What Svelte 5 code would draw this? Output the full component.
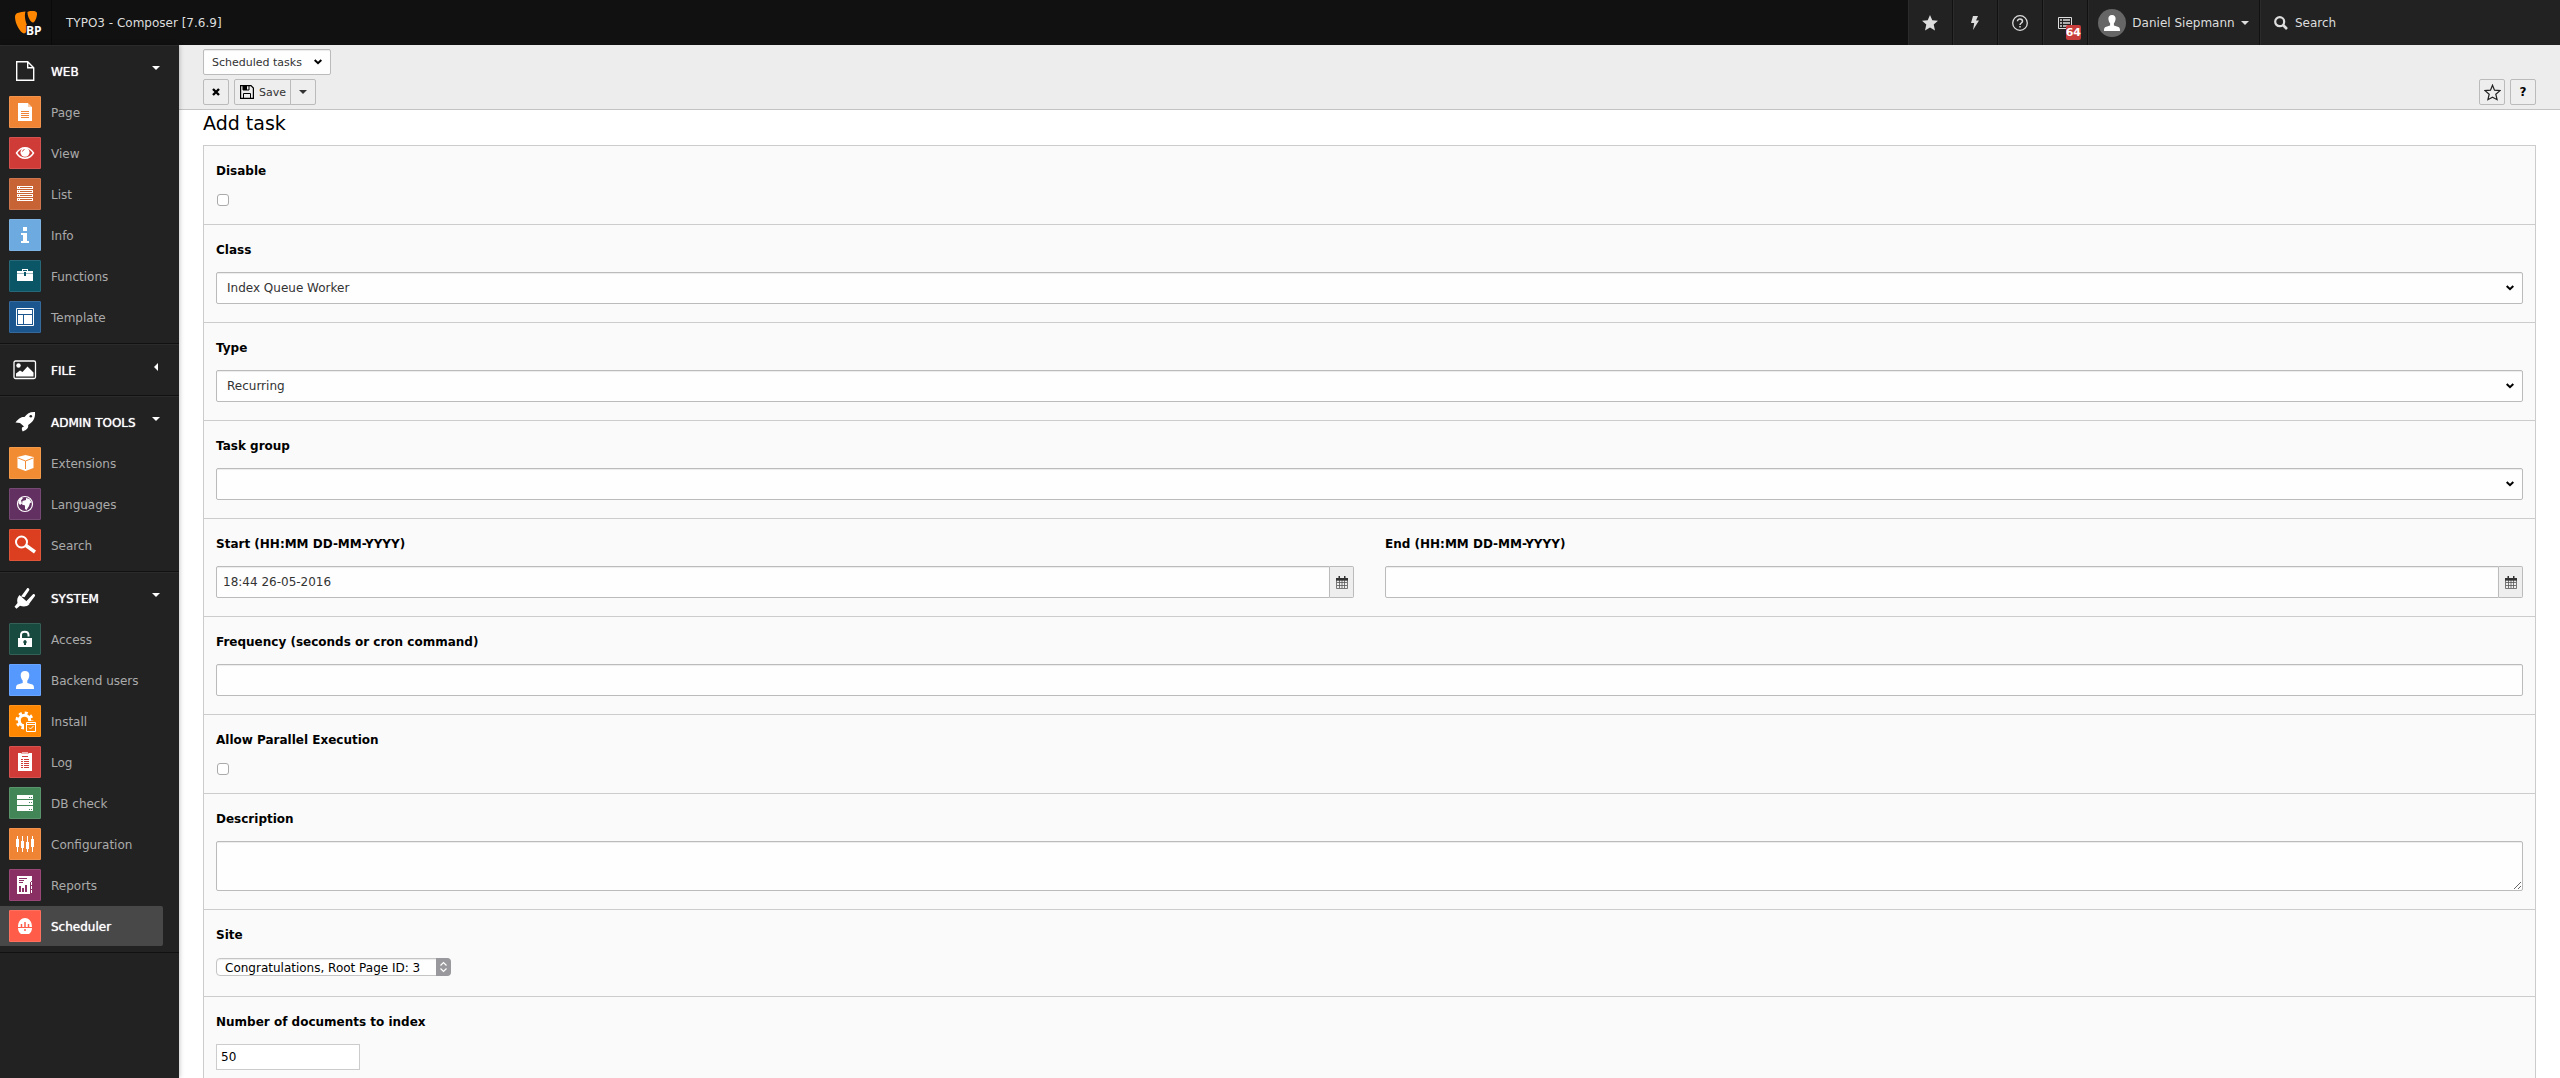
<script lang="ts">
    interface Module {
        label: string;
        icon: string;
        color: string;
    }

    interface Group {
        label: string;
        icon: string;
        open: boolean;
        items: Module[];
    }

    const groups: Group[] = [
        {
            label: "WEB",
            icon: "web",
            open: true,
            items: [
                { label: "Page", icon: "page", color: "#ef8534" },
                { label: "View", icon: "view", color: "#cf3c38" },
                { label: "List", icon: "list", color: "#c86335" },
                { label: "Info", icon: "info", color: "#6daae0" },
                { label: "Functions", icon: "functions", color: "#0a5566" },
                { label: "Template", icon: "template", color: "#1b568f" },
            ],
        },
        { label: "FILE", icon: "file", open: false, items: [] },
        {
            label: "ADMIN TOOLS",
            icon: "tools",
            open: true,
            items: [
                { label: "Extensions", icon: "extensions", color: "#f28c33" },
                { label: "Languages", icon: "languages", color: "#633062" },
                { label: "Search", icon: "search", color: "#db3f20" },
            ],
        },
        {
            label: "SYSTEM",
            icon: "system",
            open: true,
            items: [
                { label: "Access", icon: "access", color: "#194a3f" },
                { label: "Backend users", icon: "users", color: "#5599ff" },
                { label: "Install", icon: "install", color: "#ff8700" },
                { label: "Log", icon: "log", color: "#cf3c38" },
                { label: "DB check", icon: "db", color: "#428657" },
                { label: "Configuration", icon: "config", color: "#ef8534" },
                { label: "Reports", icon: "reports", color: "#8a2f63" },
                { label: "Scheduler", icon: "scheduler", color: "#ff5d49" },
            ],
        },
    ];

    let active = $state("Scheduler");
    let disabled = $state(false);
    let parallel = $state(false);
    let start = $state("18:44 26-05-2016");
    let end = $state("");
    let frequency = $state("");
    let description = $state("");
    let documents = $state("50");
</script>

{#snippet groupIcon(name: string)}
    <svg width="32" height="32" viewBox="0 0 32 32" aria-hidden="true">
        {#if name === "web"}
            <path d="M7.700 6.700h11l6 6v12.600h-17zM18.700 6.700v6h6" fill="none" stroke="#fff" stroke-width="1.400" />
        {:else if name === "file"}
            <rect x="5" y="7" width="21.500" height="17.500" rx="1.500" fill="none" stroke="#fff" stroke-width="1.300" />
            <circle cx="9.500" cy="11.500" r="2.200" fill="#fff" />
            <path d="M7 22.500v-3l4-3 2.500 1.500 5-5.500 6 6v4z" fill="#fff" />
        {:else if name === "tools"}
            <path d="M26 6c-5-.3-8 1.500-10.500 5-3-.3-5.500.8-9 5.500l4.500.5 4 3.500-2 1c-.3 1.700-.2 2.500.8 4 4-2 5.700-3 5.400-6.500C24 16 26.500 12 26 6z" fill="#fff" />
            <circle cx="21.800" cy="10.300" r="1.300" fill="#222" />
        {:else}
            <path d="M10.500 13l10 9c-2.500 2.800-6 3-9.500 1.800l-3.500 2.900-2-2 3-3.700c-.8-3.200 0-6 2-8z" fill="#fff" />
            <path d="M12 14.500l6-8c1-1.200 3 .4 2.200 1.800l-4.700 7M17 19.500l7-7.300c1.200-1 2.800.8 1.800 2L20 22z" fill="#fff" />
        {/if}
    </svg>
{/snippet}

{#snippet moduleIcon(name: string, color: string)}
    <svg width="32" height="32" viewBox="0 0 32 32" aria-hidden="true">
        <rect width="32" height="32" rx="1" fill={color} />
        <rect x=".5" y=".5" width="31" height="31" rx="1" fill="none" stroke="#fff" stroke-opacity=".12" />
        {#if name === "page"}
            <path d="M9 7h10v4h4v14H9z" fill="#fff" />
            <path d="M19 7l4 4h-4z" fill="#fff" fill-opacity=".6" />
            <path d="M12 15.500h8M12 17.500h8M12 19.500h8M12 21.500h8" stroke={color} />
        {:else if name === "view"}
            <path d="M7.500 16c4.500-7 12.500-7 17 0-4.500 7-12.500 7-17 0z" fill="none" stroke="#fff" stroke-width="1.400" />
            <circle cx="16" cy="15.300" r="4.500" fill="#fff" />
            <path d="M13.500 14.500a2.500 2.500 0 0 1 2-2" fill="none" stroke={color} />
        {:else if name === "list"}
            <path d="M8 8h16v3H8zM8 12h16v3H8zM8 16h16v3H8zM8 20h16v3H8z" fill="#fff" />
            <path d="M9 9.500h1m1 0h12M9 13.500h1m1 0h12M9 17.500h1m1 0h12M9 21.500h1m1 0h12" stroke={color} />
        {:else if name === "info"}
            <path d="M14 8h4v4h-4zM12 14h6v8h2v2h-8v-2h2v-6h-2z" fill="#fff" />
        {:else if name === "functions"}
            <path d="M13 11V9h6v2h5v10H8V11z" fill="#fff" />
            <path d="M14 10.500h4" stroke={color} />
            <path d="M8 13.500h7m2 0h7" stroke={color} stroke-opacity=".4" />
            <path d="M15 12h2v4h-2z" fill={color} />
        {:else if name === "template"}
            <path d="M7.500 7.500h17v17h-17z" fill="none" stroke="#fff" />
            <path d="M9 9h14v4H9zM9 14h5v9H9zM15 14h8v9h-8z" fill="#fff" />
        {:else if name === "extensions"}
            <path d="M16.500 8l8 2v11l-8 3-8-3V10z" fill="#fff" />
            <path d="M9 11l7.500 3 7.500-3M16.500 14v8" fill="none" stroke={color} />
        {:else if name === "languages"}
            <circle cx="16" cy="16" r="7.500" fill="none" stroke="#fff" stroke-width="1.200" />
            <path d="M17 10l3.500 1 2 3.500-1.500.5-1 3-2.500 4-1.500-1v-3.500l-3-1 .5-3.500 3.500-1zM10 12l2-2.500 2 .5-2 2.500 1 3-2 1.500-1.500-2z" fill="#fff" />
        {:else if name === "search"}
            <circle cx="12.500" cy="13" r="5.500" fill="none" stroke="#fff" stroke-width="2" />
            <path d="M17 16.500l9 6.500" stroke="#fff" stroke-width="3.400" />
        {:else if name === "access"}
            <path d="M9 15h14v9H9z" fill="#fff" />
            <path d="M12 15v-3c0-4.500 7.500-4.500 7.500 0v1.500" fill="none" stroke="#fff" stroke-width="2" />
            <path d="M16 17a2 2 0 0 1 1 3.500V22h-2v-1.500A2 2 0 0 1 16 17z" fill={color} />
        {:else if name === "users"}
            <path d="M16 7c3 0 4.500 2 4.300 4.500-.2 2.500-1 4-2 5V19l5 1.500c1.200.5 1.700 1.500 1.700 4.500H7c0-3 .5-4 1.700-4.500l5-1.500v-2.500c-1-1-1.800-2.500-2-5C11.500 9 13 7 16 7z" fill="#fff" />
        {:else if name === "install"}
            <circle cx="15.500" cy="15.500" r="5.200" fill="none" stroke="#fff" stroke-width="3" />
            <circle cx="15.500" cy="15.500" r="7.500" fill="none" stroke="#fff" stroke-width="3" stroke-dasharray="3 2.890" />
            <path d="M15 16h14v13H15z" fill={color} />
            <path d="M17.500 17.500h9v9h-9zM17.500 19.500h9" fill="none" stroke="#fff" />
            <path d="M20 22.500l1.500 1.500 3-3" fill="none" stroke="#fff" />
        {:else if name === "log"}
            <path d="M9 7h14v18H9z" fill="#fff" />
            <path d="M13 6.500h6" stroke="#fff" stroke-opacity=".6" />
            <path d="M12 7.500h8" stroke={color} stroke-opacity=".4" />
            <path d="M13 10.500h6M12 13.500h2m1 0h5M12 15.500h2m1 0h5M12 17.500h2m1 0h5M12 19.500h2m1 0h5M12 21.500h2m1 0h5" stroke={color} />
        {:else if name === "db"}
            <path d="M8 8h16v4H8zM8 13h16v5H8zM8 19h16v5H8z" fill="#fff" />
            <path d="M20 10.500h1m1 0h1M20 15.500h1m1 0h1M20 22.500h1m1 0h1" stroke={color} />
        {:else if name === "config"}
            <path d="M8.500 8v16M13.500 8v16M18.500 8v16M23.500 8v16" stroke="#fff" />
            <path d="M7 11h3v8H7zM12 13h3v7h-3zM17 14h3v7h-3zM22 11h3v8h-3z" fill="#fff" />
        {:else if name === "reports"}
            <path d="M8 7h15v5h-1v13H8z" fill="#fff" />
            <path d="M10 9.500h8M10 11.500h5M10 13.500h4" stroke={color} />
            <path d="M10 17h2v6h-2zM13 19h2v4h-2zM16 16h2v7h-2z" fill={color} />
            <path d="M22.500 13v12" stroke="#fff" stroke-dasharray="3 1" />
            <path d="M21.500 13v12" stroke={color} />
        {:else}
            <path d="M9 17c0-12 14-12 14 0zM9 18h14c0 3-1.500 5-3 6h-8c-1.500-1-3-3-3-6z" fill="#fff" />
            <path d="M12.500 14v3M16 12v5M19.500 14v3M16 19v2" stroke={color} stroke-width="1.500" />
        {/if}
    </svg>
{/snippet}

{#snippet chevron()}
    <svg class="chevron" width="8" height="6" viewBox="0 0 8 6" aria-hidden="true">
        <path d="M.7 1l3.300 3.200L7.300 1" fill="none" stroke="#000" stroke-width="2" />
    </svg>
{/snippet}

{#snippet calendar()}
    <svg width="12" height="13" viewBox="0 0 12 13" aria-hidden="true">
        <path d="M.5 4h11v8.500H.5zM3.500 4v8M6 4v8M8.500 4v8M1 6.500h10M1 9.500h10" fill="none" stroke="#555" stroke-width=".8" />
        <path d="M0 2h12v2.500H0zM2.500 0h1.500v3H2.500zM8 0h1.500v3H8z" fill="#333" />
    </svg>
{/snippet}

<div class="backend">
    <header class="topbar">
        <a class="logo" href="#top" aria-label="TYPO3">
            <svg width="32" height="28" viewBox="0 0 32 28">
                <path d="M0 6c0-2 1-3.500 2.500-4C5 1.200 8 .7 10.500.500 9 5 10.500 11 13 16.500 12 20 11 22.500 9 22.500 5 21.500 0 12.500 0 6z" fill="#ff8700" />
                <path d="M12.500 1.500C12.500.5 14 0 17 0s5 .6 5 2.500c0 3.500-2 9-4 9-2.500 0-5.500-6-5.500-10z" fill="#ff8700" />
                <text x="11" y="24" class="logo-text">BP</text>
            </svg>
        </a>
        <span class="site-name">TYPO3 - Composer [7.6.9]</span>
        <nav class="toolbar" aria-label="Toolbar">
            <button class="tool" aria-label="Bookmarks">
                <svg width="16" height="16" viewBox="0 0 16 16">
                    <path d="M8 0l2.300 5.200 5.700.6-4.300 3.800 1.300 6L8 12.600 3 15.600l1.300-6L0 5.800l5.700-.6z" fill="#ddd" />
                </svg>
            </button>
            <button class="tool" aria-label="Clear cache">
                <svg width="8" height="14" viewBox="0 0 8 14">
                    <path d="M2 0h5L5 4.500h3L2 14l1.200-7H0z" fill="#ddd" />
                </svg>
            </button>
            <button class="tool" aria-label="Help">
                <svg width="16" height="16" viewBox="0 0 16 16">
                    <circle cx="8" cy="8" r="7.300" fill="none" stroke="#ddd" stroke-width="1.300" />
                    <path d="M5.500 6.300c0-3.200 5-3 5 0 0 1.700-2.500 1.700-2.500 3.700M8 11v1.600" fill="none" stroke="#ddd" stroke-width="1.500" />
                </svg>
            </button>
            <button class="tool" aria-label="System information">
                <svg width="14" height="12" viewBox="0 0 14 12">
                    <path d="M.5.500h13v11H.5z" fill="none" stroke="#ddd" />
                    <path d="M2 3h2m1 0h7M2 6h2m1 0h7M2 9h2m1 0h7" stroke="#ddd" stroke-width="1.500" />
                </svg>
                <span class="badge">64</span>
            </button>
            <button class="tool user">
                <svg width="28" height="28" viewBox="0 0 28 28" aria-hidden="true">
                    <circle cx="14" cy="14" r="14" fill="#666" />
                    <path d="M14 6c2.600 0 3.800 1.700 3.600 4-.2 2-.8 3.300-1.700 4.200v2.300l4.500 1.500c1.200.4 1.600 1.300 1.600 4H6c0-2.700.4-3.600 1.600-4l4.500-1.500v-2.300c-.9-.9-1.500-2.200-1.700-4.200C10.200 7.700 11.400 6 14 6z" fill="#fff" />
                </svg>
                <span>Daniel Siepmann</span>
                <i class="caret"></i>
            </button>
            <button class="tool search">
                <svg width="14" height="14" viewBox="0 0 14 14">
                    <circle cx="5.700" cy="5.700" r="4.500" fill="none" stroke="#ddd" stroke-width="2.200" />
                    <path d="M9 9l4 4" stroke="#ddd" stroke-width="2.600" />
                </svg>
                <span>Search</span>
            </button>
        </nav>
    </header>

    <div class="workspace">
        <nav class="modules" aria-label="Modules">
            {#each groups as group}
                <section class="group">
                    <button class="group-header" aria-expanded={group.open}>
                        {@render groupIcon(group.icon)}
                        <span class="group-name">{group.label}</span>
                        <i class="caret" class:closed={!group.open}></i>
                    </button>
                    {#if group.items.length}
                        <ul class="items">
                            {#each group.items as item}
                                <li>
                                    <a
                                        class="item"
                                        class:active={active === item.label}
                                        href="#{item.icon}"
                                        onclick={() => (active = item.label)}
                                    >
                                        {@render moduleIcon(item.icon, item.color)}
                                        <span class="item-name">{item.label}</span>
                                    </a>
                                </li>
                            {/each}
                        </ul>
                    {/if}
                </section>
            {/each}
        </nav>

        <main class="content">
            <div class="docheader">
                <div class="select menu">
                    <select aria-label="Function">
                        <option>Scheduled tasks</option>
                    </select>
                    {@render chevron()}
                </div>
                <div class="buttons">
                    <button class="btn square" aria-label="Close">
                        <svg width="8" height="8" viewBox="0 0 8 8">
                            <path d="M1 1l6 6M7 1L1 7" stroke="#000" stroke-width="2.400" />
                        </svg>
                    </button>
                    <div class="btn-group">
                        <button class="btn save">
                            <svg width="14" height="14" viewBox="0 0 14 14" aria-hidden="true">
                                <path d="M.6.600h10.400l2.400 2.400v10.400H.6z" fill="none" stroke="#000" stroke-width="1.200" />
                                <path d="M3 0h6v5H3zM3.500 13.500v-5h7v5" fill="none" stroke="#000" />
                                <path d="M3 1h4v4H3z" />
                            </svg>
                            <span>Save</span>
                        </button>
                        <button class="btn square" aria-label="More save options">
                            <i class="caret"></i>
                        </button>
                    </div>
                    <button class="btn square push" aria-label="Create bookmark">
                        <svg width="17" height="17" viewBox="0 0 17 17">
                            <path d="M8.500 1.200l2 5 5.500.4-4.200 3.600 1.300 5.500-4.600-2.400-4.600 2.400 1.300-5.500L1 6.600l5.500-.4z" fill="none" stroke="#222" stroke-width="1.200" />
                        </svg>
                    </button>
                    <button class="btn square help" aria-label="Help">?</button>
                </div>
            </div>

            <div class="module-body">
                <h1>Add task</h1>
                <form class="fields" onsubmit={(e) => e.preventDefault()}>
                    <div class="row">
                        <label for="disable">Disable</label>
                        <input id="disable" type="checkbox" bind:checked={disabled} />
                    </div>
                    <div class="row">
                        <label for="class">Class</label>
                        <div class="select">
                            <select id="class">
                                <option>Index Queue Worker</option>
                            </select>
                            {@render chevron()}
                        </div>
                    </div>
                    <div class="row">
                        <label for="type">Type</label>
                        <div class="select">
                            <select id="type">
                                <option>Recurring</option>
                                <option>Single</option>
                            </select>
                            {@render chevron()}
                        </div>
                    </div>
                    <div class="row">
                        <label for="group">Task group</label>
                        <div class="select">
                            <select id="group">
                                <option></option>
                            </select>
                            {@render chevron()}
                        </div>
                    </div>
                    <div class="row columns">
                        <div>
                            <label for="start">Start (HH:MM DD-MM-YYYY)</label>
                            <div class="date">
                                <input id="start" class="control" type="text" bind:value={start} />
                                <button class="addon" type="button" aria-label="Pick start date">
                                    {@render calendar()}
                                </button>
                            </div>
                        </div>
                        <div>
                            <label for="end">End (HH:MM DD-MM-YYYY)</label>
                            <div class="date">
                                <input id="end" class="control" type="text" bind:value={end} />
                                <button class="addon" type="button" aria-label="Pick end date">
                                    {@render calendar()}
                                </button>
                            </div>
                        </div>
                    </div>
                    <div class="row">
                        <label for="frequency">Frequency (seconds or cron command)</label>
                        <input id="frequency" class="control" type="text" bind:value={frequency} />
                    </div>
                    <div class="row">
                        <label for="parallel">Allow Parallel Execution</label>
                        <input id="parallel" type="checkbox" bind:checked={parallel} />
                    </div>
                    <div class="row">
                        <label for="description">Description</label>
                        <textarea id="description" class="control" bind:value={description}></textarea>
                    </div>
                    <div class="row">
                        <label for="site">Site</label>
                        <div class="select native">
                            <select id="site">
                                <option>Congratulations, Root Page ID: 3</option>
                            </select>
                            <svg class="stepper" width="15" height="18" viewBox="0 0 15 18" aria-hidden="true">
                                <path d="M0 0h11a4 4 0 0 1 4 4v10a4 4 0 0 1-4 4H0z" fill="#99999d" />
                                <path d="M4.500 7.500l3-3 3 3M4.500 10.500l3 3 3-3" fill="none" stroke="#fff" stroke-width="1.200" />
                            </svg>
                        </div>
                    </div>
                    <div class="row">
                        <label for="documents">Number of documents to index</label>
                        <input id="documents" class="plain" type="text" bind:value={documents} />
                    </div>
                </form>
            </div>
        </main>
    </div>
</div>

<style>
    :global(body) {
        margin: 0;
        background: #fff;
    }

    .backend {
        display: flex;
        flex-direction: column;
        height: 100vh;
        overflow: hidden;
        font-family: Verdana, "DejaVu Sans", sans-serif;
        font-size: 12px;
        line-height: 18px;
        color: #000;
    }

    button,
    input,
    select,
    textarea {
        box-sizing: border-box;
        margin: 0;
        font: inherit;
        color: inherit;
    }

    svg {
        display: block;
        flex: none;
    }

    /* ── Top bar ── */
    .topbar {
        display: flex;
        align-items: stretch;
        height: 45px;
        flex: none;
        background: #111;
        color: #ddd;
    }

    .logo {
        display: flex;
        align-items: center;
        box-sizing: border-box;
        width: 52px;
        padding: 5px 0 0 15px;
        border-right: 1px solid #0a0a0a;
    }

    .logo-text {
        font: bold 12px "Open Sans", sans-serif;
        fill: #fff;
        stroke: #111;
        stroke-width: 2px;
        paint-order: stroke;
    }

    .site-name {
        padding: 14px 14px 0;
    }

    .toolbar {
        display: flex;
        width: 652px;
        margin-left: auto;
        background: #222;
    }

    .tool {
        display: flex;
        align-items: center;
        justify-content: center;
        width: 45px;
        padding: 1px 0 0;
        border: 0;
        border-right: 1px solid #111;
        box-shadow: inset 1px 0 #2b2b2b;
        background: none;
        position: relative;
    }

    .badge {
        position: absolute;
        right: 6px;
        bottom: 5px;
        border-radius: 2px;
        background: #c83c3c;
        color: #fff;
        font: bold 11px/15px "DejaVu Sans", sans-serif;
    }

    .user {
        gap: 6px;
        width: 172px;
    }

    .search {
        gap: 7px;
        padding-left: 14px;
        width: auto;
        border-right: 0;
    }

    .caret {
        width: 0;
        height: 0;
        border: 4px solid transparent;
        border-top-color: currentColor;
        border-bottom: 0;
    }

    .caret.closed {
        border: 4px solid transparent;
        border-right-color: currentColor;
        border-left: 0;
    }

    /* ── Module menu ── */
    .workspace {
        display: flex;
        flex: 1;
        min-height: 0;
    }

    .modules {
        width: 179px;
        flex: none;
        background: #222;
        box-shadow: 0 0 5px rgba(0, 0, 0, 0.3);
        z-index: 1;
        color: #fff;
    }

    .group {
        padding-bottom: 4px;
        border-top: 1px solid #2b2b2b;
        border-bottom: 1px solid #111;
    }

    .group-header {
        display: flex;
        align-items: center;
        width: 100%;
        height: 46px;
        padding: 4px 19px 0 9px;
        border: 0;
        background: none;
        text-align: left;
    }

    .group-name {
        flex: 1;
        padding: 2px 0 0 10px;
        text-shadow: 0 0 1px #fff;
    }

    .group-header .caret {
        margin-bottom: 7px;
    }

    .group-header .caret.closed {
        margin-right: 2px;
    }

    .items {
        display: flex;
        flex-direction: column;
        gap: 1px;
        margin: 0;
        padding: 0 16px 2px 0;
        list-style: none;
    }

    .item {
        display: flex;
        align-items: center;
        gap: 10px;
        height: 40px;
        padding-left: 9px;
        border-radius: 0 2px 2px 0;
        color: #aaa;
        text-decoration: none;
    }

    .item.active {
        background: #484848;
        color: #fff;
        text-shadow: 0 0 1px #fff;
    }

    .item-name {
        padding-top: 2px;
    }

    /* ── Content ── */
    .content {
        flex: 1;
        min-width: 0;
        overflow: auto;
        scrollbar-width: none;
    }

    .docheader {
        display: flex;
        flex-direction: column;
        gap: 4px;
        padding: 4px 24px;
        border-bottom: 1px solid #c3c3c3;
        background: #ededed;
        color: #333;
        font-size: 11px;
    }

    .buttons {
        display: flex;
        gap: 5px;
    }

    .btn-group {
        display: flex;
    }

    .btn {
        display: flex;
        align-items: center;
        justify-content: center;
        height: 26px;
        padding: 0;
        border: 1px solid #bbb;
        border-radius: 2px;
        background: #eee;
    }

    .square {
        width: 26px;
    }

    .btn-group .square {
        margin-left: -1px;
        border-radius: 0 2px 2px 0;
    }

    .save {
        gap: 5px;
        padding: 0 4px 0 5px;
        border-radius: 2px 0 0 2px;
    }

    .save span {
        padding-top: 2px;
    }

    .push {
        margin-left: auto;
    }

    .help {
        color: #000;
        font-size: 12px;
        font-weight: bold;
    }

    .module-body {
        padding: 0 24px;
    }

    h1 {
        margin: 0;
        padding: 1px 0 10px;
        font-size: 19px;
        font-weight: normal;
        line-height: 24px;
    }

    .fields {
        border: 1px solid #ccc;
        border-top: 0;
        background: #fafafa;
    }

    .row {
        padding: 16px 12px 18px;
        border-top: 1px solid #ccc;
    }

    .columns {
        display: grid;
        grid-template-columns: 1fr 1fr;
        gap: 31px;
    }

    label {
        display: block;
        width: fit-content;
        margin-bottom: 13px;
        font-weight: bold;
    }

    .control,
    .select select {
        display: block;
        width: 100%;
        height: 32px;
        padding: 0 6px;
        border: 1px solid #bbb;
        border-radius: 2px;
        background: #fefefe;
        box-shadow: inset 0 1px 1px rgba(0, 0, 0, 0.075);
        color: #333;
    }

    textarea.control {
        height: 50px;
        padding: 6px;
        resize: vertical;
    }

    .select {
        display: grid;
        align-items: center;
    }

    .select > :global(*) {
        grid-area: 1 / 1;
    }

    .select select {
        appearance: none;
        padding: 0 24px 0 10px;
    }

    .chevron {
        justify-self: end;
        margin-right: 9px;
        pointer-events: none;
    }

    .menu {
        width: 128px;
    }

    .menu select {
        height: 26px;
        padding: 2px 8px 0;
    }

    .native {
        width: 235px;
        padding: 1px 0 2px;
    }

    .native select {
        height: 18px;
        padding: 0 16px 0 8px;
        border-color: #c4c4c4;
        border-radius: 4px;
        color: #000;
    }

    .stepper {
        justify-self: end;
        pointer-events: none;
    }

    .date {
        display: flex;
    }

    .date .control {
        flex: 1;
        border-radius: 2px 0 0 2px;
    }

    .addon {
        display: flex;
        align-items: center;
        justify-content: center;
        width: 24px;
        padding: 0;
        border: 1px solid #bbb;
        border-left: 0;
        border-radius: 0 2px 2px 0;
        background: #eee;
    }

    input[type="checkbox"] {
        display: block;
        appearance: none;
        width: 12px;
        height: 12px;
        margin: 14px 0 0 1px;
        border: 1px solid #aaa;
        border-radius: 3px;
        background: #fff;
    }

    input[type="checkbox"]:checked {
        background: #333;
    }

    .plain {
        display: block;
        width: 144px;
        height: 26px;
        padding: 0 4px;
        border: 1px solid #ccc;
        background: #fff;
    }
</style>
